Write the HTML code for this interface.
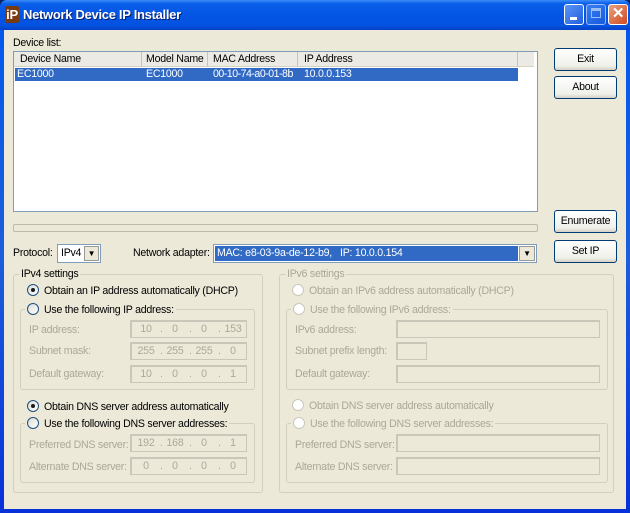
<!DOCTYPE html>
<html><head><style>
*{box-sizing:border-box;margin:0;padding:0}
body{width:630px;height:513px;overflow:hidden;background:#0A246A;font:10.6px "Liberation Sans",sans-serif;letter-spacing:-0.25px;color:#000;position:relative}
.a{position:absolute;white-space:nowrap}
#frame{position:absolute;left:0;top:0;width:630px;height:513px;background:linear-gradient(#0058EE,#1C5EDB 50%,#0831D9);border-radius:7px 7px 0 0}
#title{position:absolute;left:0;top:0;width:630px;height:30px;border-radius:7px 7px 0 0;background:linear-gradient(#3C8CF8 0,#0A5FEA 12%,#0355E4 50%,#0452E0 85%,#0540C8 100%)}
#client{position:absolute;left:4px;top:30px;width:622px;height:479px;background:#ECE9D8}
.tb{position:absolute;top:4px;width:20px;height:21px;border:1px solid #fff;border-radius:3px;background:linear-gradient(135deg,#5A95F5,#2260E0)}
.btn{position:absolute;width:63px;height:23px;border:1px solid #003C74;border-radius:3px;background:linear-gradient(#fff,#F0F0EA 80%,#D6D0C5);text-align:center;line-height:21px}
.grp{position:absolute;border:1px solid #D0D0BF;border-radius:3px}
.gl{position:absolute;top:-7px;background:#ECE9D8;padding:0 2px;white-space:nowrap}
.dis{color:#ACA899}
.rad{display:inline-block;width:12px;height:12px;border-radius:50%;border:1px solid #1C5180;background:linear-gradient(135deg,#DCDCD7,#fff);vertical-align:-2px;margin-right:5px;position:relative}
.rad.d{border-color:#CAC8BB;background:#fff}
.rad.on:after{content:"";position:absolute;left:3px;top:3px;width:4px;height:4px;border-radius:50%;background:#1a1a1a}
.box{position:absolute;border:1px solid #C9C7BA;background:#ECE9D8;color:#ACA899;height:18px;line-height:16px;box-shadow:inset 1px 1px 0 #C9C7BA}
.ip span{position:absolute;text-align:center;width:24px}
.ip i{position:absolute;font-style:normal}
</style></head><body>
<div id="frame"></div>
<div id="title">
 <div class="a" style="left:5px;top:6px;width:14px;height:17px;background:#7a3b10;color:#fff;font-weight:bold;font-size:13px;line-height:17px;text-align:center;border-radius:2px">iP</div>
 <div class="a" style="left:23px;top:7px;color:#fff;font-weight:bold;font-size:13px;letter-spacing:-0.3px;text-shadow:1px 1px #0A1F6A">Network Device IP Installer</div>
 <div class="tb" style="left:564px"><div class="a" style="left:5px;top:12px;width:7px;height:3px;background:#fff"></div></div>
 <div class="tb" style="left:586px;opacity:.6"><div class="a" style="left:4px;top:3px;width:10px;height:10px;border:1px solid #fff;border-top-width:3px"></div></div>
 <div class="tb" style="left:608px;background:linear-gradient(135deg,#E8A080,#D04A20);color:#fff;font-weight:bold;font-size:15px;text-align:center;line-height:18px">✕</div>
</div>
<div id="client"></div>

<div class="a" style="left:13px;top:37px">Device list:</div>
<div class="a" style="left:13px;top:51px;width:525px;height:161px;background:#fff;border:1px solid #7F9DB9"></div>
<div class="a" style="left:14px;top:52px;width:520px;height:15px;background:#EBEAE4;border-bottom:1px solid #D6D2C2"></div>
<div class="a" style="left:20px;top:53px">Device Name</div>
<div class="a" style="left:141px;top:52px;width:1px;height:14px;background:#C7C5B2"></div>
<div class="a" style="left:146px;top:53px">Model Name</div>
<div class="a" style="left:207px;top:52px;width:1px;height:14px;background:#C7C5B2"></div>
<div class="a" style="left:213px;top:53px">MAC Address</div>
<div class="a" style="left:297px;top:52px;width:1px;height:14px;background:#C7C5B2"></div>
<div class="a" style="left:304px;top:53px">IP Address</div>
<div class="a" style="left:517px;top:52px;width:1px;height:14px;background:#C7C5B2"></div>
<div class="a" style="left:15px;top:68px;width:503px;height:13px;background:#316AC5"></div>
<div class="a" style="left:17px;top:68px;color:#fff">EC1000</div>
<div class="a" style="left:146px;top:68px;color:#fff">EC1000</div>
<div class="a" style="left:213px;top:68px;color:#fff;letter-spacing:-0.5px">00-10-74-a0-01-8b</div>
<div class="a" style="left:304px;top:68px;color:#fff">10.0.0.153</div>

<div class="a" style="left:13px;top:224px;width:525px;height:8px;border:1px solid #BEBAA8;border-radius:2px;background:#ECE9D8"></div>

<div class="btn" style="left:554px;top:48px">Exit</div>
<div class="btn" style="left:554px;top:76px">About</div>
<div class="btn" style="left:554px;top:210px">Enumerate</div>
<div class="btn" style="left:554px;top:240px">Set IP</div>

<div class="a" style="left:13px;top:247px">Protocol:</div>
<div class="a" style="left:57px;top:244px;width:44px;height:19px;border:1px solid #7F9DB9;background:#fff;padding:2px 0 0 3px">IPv4</div>
<div class="a" style="left:84px;top:246px;width:15px;height:15px;border:1px solid #999;background:#ECE9D8;font-size:8px;text-align:center;line-height:14px">▼</div>
<div class="a" style="left:133px;top:247px">Network adapter:</div>
<div class="a" style="left:213px;top:244px;width:324px;height:19px;border:1px solid #7F9DB9;background:#fff"></div>
<div class="a" style="left:215px;top:246px;width:303px;height:15px;background:#316AC5;color:#fff;padding:1px 0 0 2px">MAC: e8-03-9a-de-12-b9,&nbsp;&nbsp; IP: 10.0.0.154</div>
<div class="a" style="left:519px;top:246px;width:16px;height:15px;border:1px solid #999;background:#ECE9D8;font-size:8px;text-align:center;line-height:14px">▼</div>

<!-- IPv4 -->
<div class="grp" style="left:13px;top:274px;width:250px;height:219px"><div class="gl" style="left:5px">IPv4 settings</div></div>
<div class="a" style="left:27px;top:284px"><span class="rad on"></span>Obtain an IP address automatically (DHCP)</div>
<div class="grp" style="left:20px;top:309px;width:235px;height:81px"><div class="gl" style="left:4px"><span class="rad"></span>Use the following IP address:</div></div>
<div class="a dis" style="left:29px;top:324px">IP address:</div>
<div class="a dis" style="left:29px;top:345px">Subnet mask:</div>
<div class="a dis" style="left:29px;top:368px">Default gateway:</div>
<div class="box ip" style="left:130px;top:320px;width:117px"><span style="left:3px">10</span><i style="left:29px">.</i><span style="left:32px">0</span><i style="left:58px">.</i><span style="left:61px">0</span><i style="left:87px">.</i><span style="left:90px">153</span></div>
<div class="box ip" style="left:130px;top:342px;width:117px"><span style="left:3px">255</span><i style="left:29px">.</i><span style="left:32px">255</span><i style="left:58px">.</i><span style="left:61px">255</span><i style="left:87px">.</i><span style="left:90px">0</span></div>
<div class="box ip" style="left:130px;top:365px;width:117px"><span style="left:3px">10</span><i style="left:29px">.</i><span style="left:32px">0</span><i style="left:58px">.</i><span style="left:61px">0</span><i style="left:87px">.</i><span style="left:90px">1</span></div>
<div class="a" style="left:27px;top:400px"><span class="rad on"></span>Obtain DNS server address automatically</div>
<div class="grp" style="left:20px;top:423px;width:235px;height:60px"><div class="gl" style="left:4px"><span class="rad"></span>Use the following DNS server addresses:</div></div>
<div class="a dis" style="left:29px;top:439px">Preferred DNS server:</div>
<div class="a dis" style="left:29px;top:461px">Alternate DNS server:</div>
<div class="box ip" style="left:130px;top:434px;width:117px"><span style="left:3px">192</span><i style="left:29px">.</i><span style="left:32px">168</span><i style="left:58px">.</i><span style="left:61px">0</span><i style="left:87px">.</i><span style="left:90px">1</span></div>
<div class="box ip" style="left:130px;top:457px;width:117px"><span style="left:3px">0</span><i style="left:29px">.</i><span style="left:32px">0</span><i style="left:58px">.</i><span style="left:61px">0</span><i style="left:87px">.</i><span style="left:90px">0</span></div>

<!-- IPv6 -->
<div class="grp" style="left:279px;top:274px;width:335px;height:219px"><div class="gl dis" style="left:5px">IPv6 settings</div></div>
<div class="a dis" style="left:292px;top:284px"><span class="rad d"></span>Obtain an IPv6 address automatically (DHCP)</div>
<div class="grp" style="left:286px;top:309px;width:322px;height:81px"><div class="gl dis" style="left:4px"><span class="rad d"></span>Use the following IPv6 address:</div></div>
<div class="a dis" style="left:295px;top:324px">IPv6 address:</div>
<div class="a dis" style="left:295px;top:345px">Subnet prefix length:</div>
<div class="a dis" style="left:295px;top:368px">Default gateway:</div>
<div class="box" style="left:396px;top:320px;width:204px"></div>
<div class="box" style="left:396px;top:342px;width:31px"></div>
<div class="box" style="left:396px;top:365px;width:204px"></div>
<div class="a dis" style="left:292px;top:399px"><span class="rad d"></span>Obtain DNS server address automatically</div>
<div class="grp" style="left:286px;top:423px;width:322px;height:60px"><div class="gl dis" style="left:4px"><span class="rad d"></span>Use the following DNS server addresses:</div></div>
<div class="a dis" style="left:295px;top:439px">Preferred DNS server:</div>
<div class="a dis" style="left:295px;top:461px">Alternate DNS server:</div>
<div class="box" style="left:396px;top:434px;width:204px"></div>
<div class="box" style="left:396px;top:457px;width:204px"></div>
</body></html>
